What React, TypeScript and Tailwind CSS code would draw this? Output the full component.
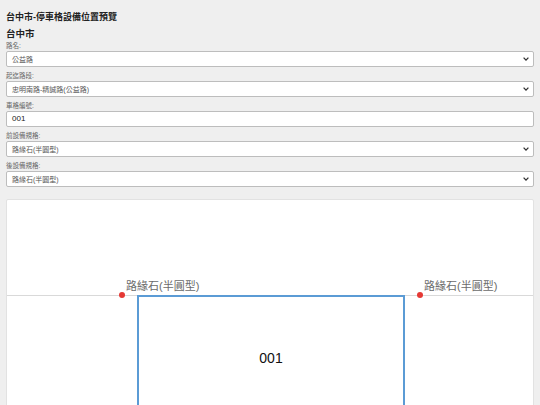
import React from "react";

const FONT = '"Liberation Sans", "Noto Sans CJK TC", sans-serif';

const Chevron = () => (
  <svg width="6" height="4" viewBox="0 0 6 4" className="shrink-0">
    <path d="M0.6 0.6 L3 3.1 L5.4 0.6" fill="none" stroke="#333" strokeWidth="1.3" />
  </svg>
);

const Field = ({ label, children }: { label: string; children: React.ReactNode }) => (
  <div className="flex flex-col gap-[1px]">
    <div className="h-[9px] overflow-visible text-[6.5px] leading-[9px] text-[#666]">{label}</div>
    {children}
  </div>
);

const SelectBox = ({ value }: { value: string }) => (
  <div className="flex h-[16px] items-center justify-between rounded-[2px] border border-[#bdbdbd] bg-white pl-[5px] pr-[4px]">
    <span className="text-[7px] leading-[9px] text-[#555]">{value}</span>
    <Chevron />
  </div>
);

const CurbLabel = ({ x }: { x: number }) => (
  <>
    <div
      className="absolute h-[6px] w-[6px] rounded-full bg-[#e53935]"
      style={{ left: x - 3, top: 92 }}
    />
    <div
      className="absolute text-[11px] leading-[14px] text-[#6b6b6b]"
      style={{ left: x + 4, top: 79 }}
    >
      路緣石(半圓型)
    </div>
  </>
);

export default function App() {
  return (
    <div
      className="flex min-h-[405px] flex-col overflow-hidden bg-[#efefef] px-[6px] pt-[11px]"
      style={{ fontFamily: FONT }}
    >
      <h1 className="h-[12px] text-[9px] font-bold leading-[12px] text-[#222]">台中市-停車格設備位置預覽</h1>
      <h2 className="mt-[4px] h-[13px] text-[9.5px] font-bold leading-[13px] text-[#222]">台中市</h2>

      <div className="mt-[1px] flex flex-col gap-[4px]">
        <Field label="路名:">
          <SelectBox value="公益路" />
        </Field>
        <Field label="起迄路段:">
          <SelectBox value="忠明南路-精誠路(公益路)" />
        </Field>
        <Field label="車格編號:">
          <div className="flex h-[16px] items-center rounded-[2px] border border-[#bdbdbd] bg-white pl-[5px]">
            <span className="text-[8px] leading-[10px] text-[#222]">001</span>
          </div>
        </Field>
        <Field label="前設備規格:">
          <SelectBox value="路緣石(半圓型)" />
        </Field>
        <Field label="後設備規格:">
          <SelectBox value="路緣石(半圓型)" />
        </Field>
      </div>

      <div className="relative mt-[12px] h-[260px] shrink-0 rounded-[2px] border border-[#e2e2e2] bg-white">
        {/* curb line */}
        <div className="absolute left-0 right-0 top-[95px] h-[1px] bg-[#d9d9d9]" />
        {/* parking space */}
        <div className="absolute left-[130px] top-[95px] flex h-[140px] w-[268px] items-center justify-center border-2 border-b-0 border-[#5b9bd5] pb-[16px]">
          <span className="text-[14px] leading-[16px] text-[#111]">001</span>
        </div>
        <CurbLabel x={115} />
        <CurbLabel x={413} />
      </div>
    </div>
  );
}
